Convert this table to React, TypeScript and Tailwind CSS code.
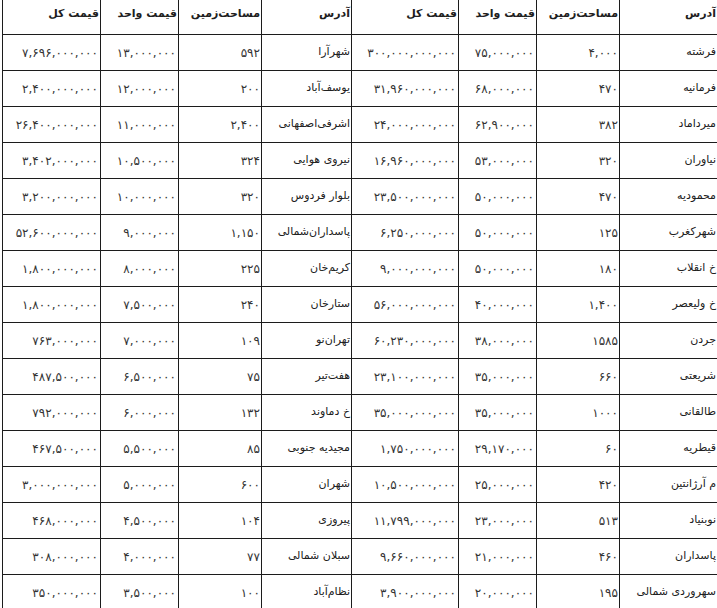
import { FC } from "react";

type Row = [string, string, string, string];

// [address, area, unit price, total price]
const rightRows: Row[] = [
	["فرشته", "۴,۰۰۰", "۷۵,۰۰۰,۰۰۰", "۳۰۰,۰۰۰,۰۰۰,۰۰۰"],
	["فرمانیه", "۴۷۰", "۶۸,۰۰۰,۰۰۰", "۳۱,۹۶۰,۰۰۰,۰۰۰"],
	["میرداماد", "۳۸۲", "۶۲,۹۰۰,۰۰۰", "۲۴,۰۰۰,۰۰۰,۰۰۰"],
	["نیاوران", "۳۲۰", "۵۳,۰۰۰,۰۰۰", "۱۶,۹۶۰,۰۰۰,۰۰۰"],
	["محمودیه", "۴۷۰", "۵۰,۰۰۰,۰۰۰", "۲۳,۵۰۰,۰۰۰,۰۰۰"],
	["شهرکغرب", "۱۲۵", "۵۰,۰۰۰,۰۰۰", "۶,۲۵۰,۰۰۰,۰۰۰"],
	["خ انقلاب", "۱۸۰", "۵۰,۰۰۰,۰۰۰", "۹,۰۰۰,۰۰۰,۰۰۰"],
	["خ ولیعصر", "۱,۴۰۰", "۴۰,۰۰۰,۰۰۰", "۵۶,۰۰۰,۰۰۰,۰۰۰"],
	["جردن", "۱۵۸۵", "۳۸,۰۰۰,۰۰۰", "۶۰,۲۳۰,۰۰۰,۰۰۰"],
	["شریعتی", "۶۶۰", "۳۵,۰۰۰,۰۰۰", "۲۳,۱۰۰,۰۰۰,۰۰۰"],
	["طالقانی", "۱۰۰۰", "۳۵,۰۰۰,۰۰۰", "۳۵,۰۰۰,۰۰۰,۰۰۰"],
	["قیطریه", "۶۰", "۲۹,۱۷۰,۰۰۰", "۱,۷۵۰,۰۰۰,۰۰۰"],
	["م آرژانتین", "۴۲۰", "۲۵,۰۰۰,۰۰۰", "۱۰,۵۰۰,۰۰۰,۰۰۰"],
	["نوبنیاد", "۵۱۳", "۲۳,۰۰۰,۰۰۰", "۱۱,۷۹۹,۰۰۰,۰۰۰"],
	["پاسداران", "۴۶۰", "۲۱,۰۰۰,۰۰۰", "۹,۶۶۰,۰۰۰,۰۰۰"],
	["سهروردی شمالی", "۱۹۵", "۲۰,۰۰۰,۰۰۰", "۳,۹۰۰,۰۰۰,۰۰۰"],
];

const leftRows: Row[] = [
	["شهرآرا", "۵۹۲", "۱۳,۰۰۰,۰۰۰", "۷,۶۹۶,۰۰۰,۰۰۰"],
	["یوسف‌آباد", "۲۰۰", "۱۲,۰۰۰,۰۰۰", "۲,۴۰۰,۰۰۰,۰۰۰"],
	["اشرفی‌اصفهانی", "۲,۴۰۰", "۱۱,۰۰۰,۰۰۰", "۲۶,۴۰۰,۰۰۰,۰۰۰"],
	["نیروی هوایی", "۳۲۴", "۱۰,۵۰۰,۰۰۰", "۳,۴۰۲,۰۰۰,۰۰۰"],
	["بلوار فردوس", "۳۲۰", "۱۰,۰۰۰,۰۰۰", "۳,۲۰۰,۰۰۰,۰۰۰"],
	["پاسداران‌شمالی", "۱,۱۵۰", "۹,۰۰۰,۰۰۰", "۵۲,۶۰۰,۰۰۰,۰۰۰"],
	["کریم‌خان", "۲۲۵", "۸,۰۰۰,۰۰۰", "۱,۸۰۰,۰۰۰,۰۰۰"],
	["ستارخان", "۲۴۰", "۷,۵۰۰,۰۰۰", "۱,۸۰۰,۰۰۰,۰۰۰"],
	["تهران‌نو", "۱۰۹", "۷,۰۰۰,۰۰۰", "۷۶۳,۰۰۰,۰۰۰"],
	["هفت‌تیر", "۷۵", "۶,۵۰۰,۰۰۰", "۴۸۷,۵۰۰,۰۰۰"],
	["خ دماوند", "۱۳۲", "۶,۰۰۰,۰۰۰", "۷۹۲,۰۰۰,۰۰۰"],
	["مجیدیه جنوبی", "۸۵", "۵,۵۰۰,۰۰۰", "۴۶۷,۵۰۰,۰۰۰"],
	["شهران", "۶۰۰", "۵,۰۰۰,۰۰۰", "۳,۰۰۰,۰۰۰,۰۰۰"],
	["پیروزی", "۱۰۴", "۴,۵۰۰,۰۰۰", "۴۶۸,۰۰۰,۰۰۰"],
	["سبلان شمالی", "۷۷", "۴,۰۰۰,۰۰۰", "۳۰۸,۰۰۰,۰۰۰"],
	["نظام‌آباد", "۱۰۰", "۳,۵۰۰,۰۰۰", "۳۵۰,۰۰۰,۰۰۰"],
];

const headers = ["آدرس", "مساحت‌زمین", "قیمت واحد", "قیمت کل"];

const cell = "border-l border-b border-[#1c1c1c] flex items-center justify-start overflow-hidden whitespace-nowrap";
const num = "text-[12px] tracking-[2px] text-[#333]";

const Cells: FC<{ row: Row }> = ({ row }) => (
	<>
		<div className={`${cell} pr-[1px] text-[11px]`}>{row[0]}</div>
		<div className={`${cell} pr-[1px] ${num}`}>{row[1]}</div>
		<div className={`${cell} pr-[2px] ${num}`}>{row[2]}</div>
		<div className={`${cell} pr-[2px] ${num}`}>{row[3]}</div>
	</>
);

export default function App() {
	return (
		<div className="w-[717px] h-[608px] overflow-hidden bg-white">
			<div
				dir="rtl"
				className="grid grid-cols-[98px_83px_78px_107px_90px_83px_78px_98px] grid-rows-[35px] auto-rows-[36px] text-[#202020] font-['Tahoma','DejaVu_Sans',sans-serif]"
			>
				{[...headers, ...headers].map((h, i) => (
					<div key={i} className={`${cell} pr-[1px] pb-[5px] text-[11px] font-bold`}>{h}</div>
				))}
				{rightRows.map((r, i) => (
					<div key={i} className="contents">
						<Cells row={r} />
						<Cells row={leftRows[i]} />
					</div>
				))}
			</div>
		</div>
	);
}
